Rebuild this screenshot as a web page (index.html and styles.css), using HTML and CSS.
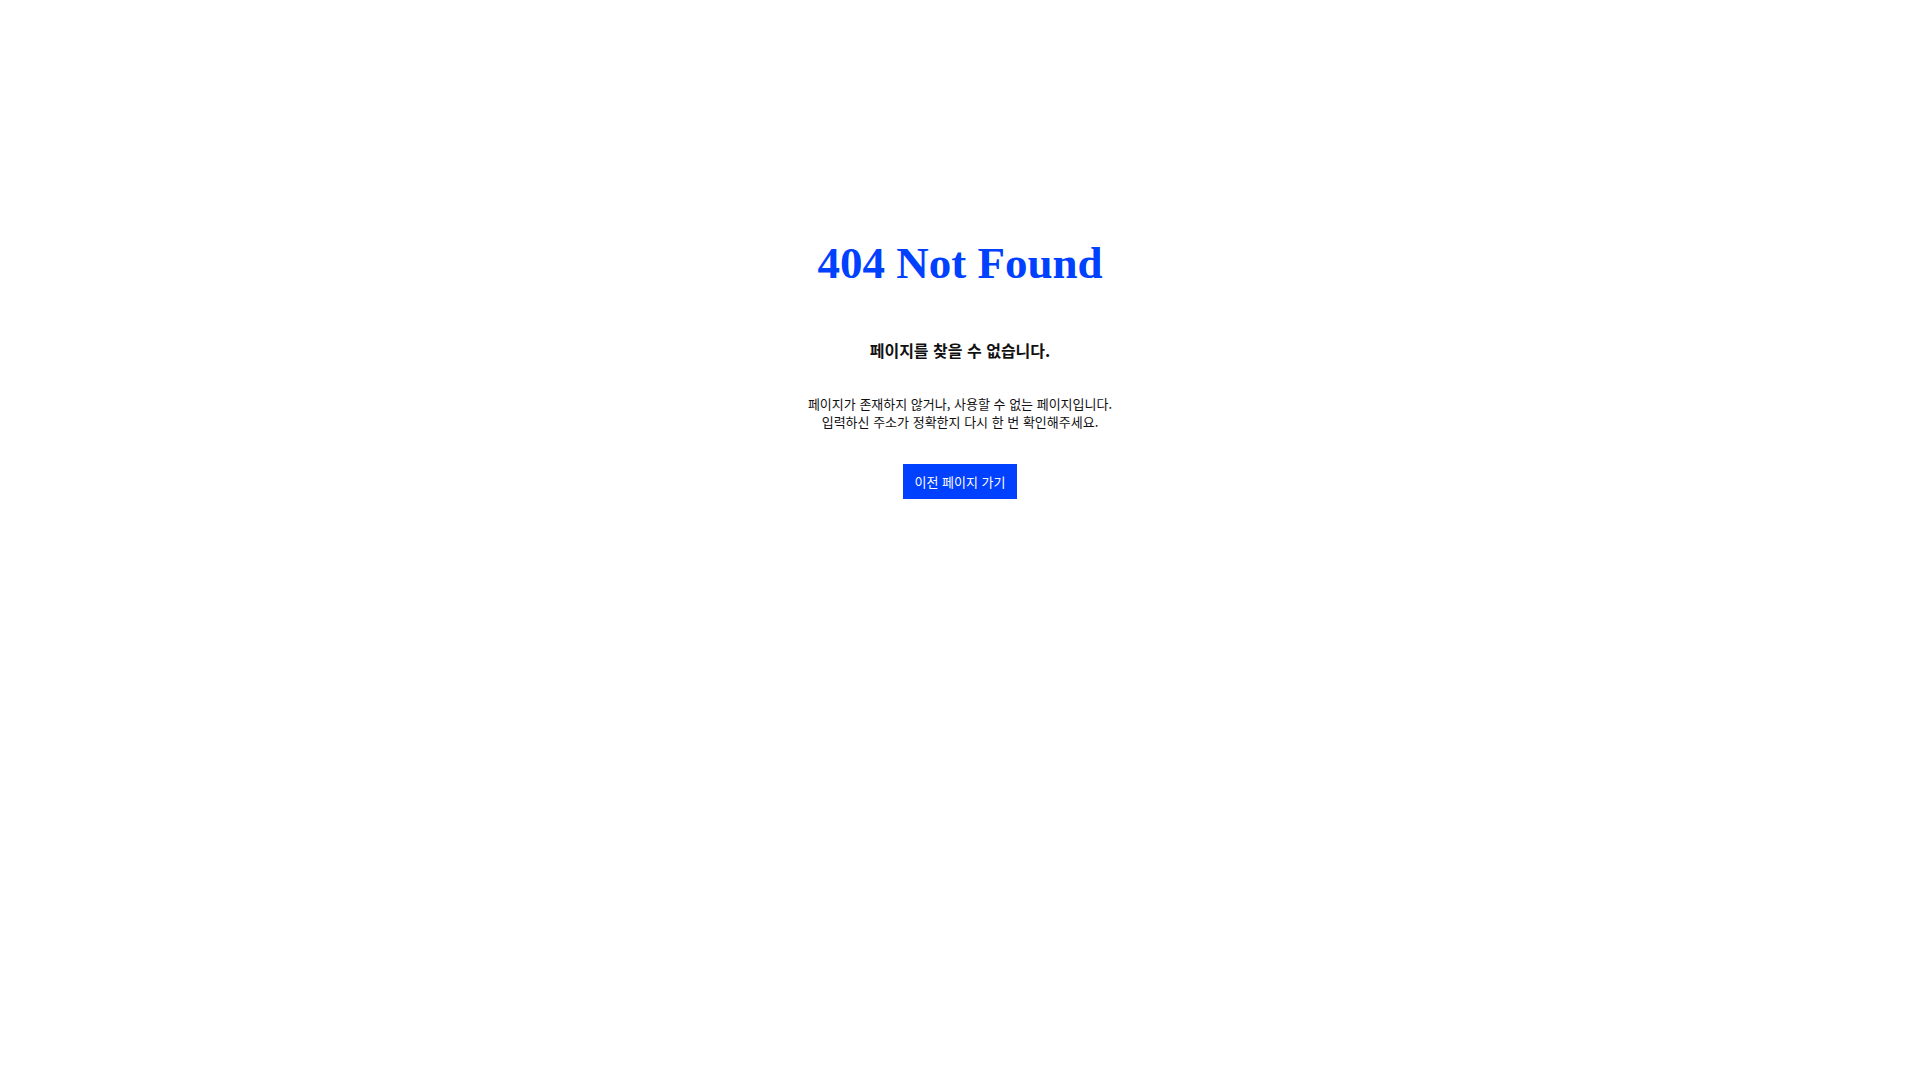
FILE: index.html
```html
<!DOCTYPE html>
<html lang="ko">

<head>
	<meta charset="UTF-8">
	<meta name="viewport" content="width=device-width, initial-scale=1.0">
	<title>404 Not Found</title>
	<link rel="stylesheet" href="styles.css">
</head>

<body>
	<main class="error-page">
		<h1 class="error-code">404 Not Found</h1>
		<h2 class="error-title">페이지를 찾을 수 없습니다.</h2>
		<p class="error-desc">
			페이지가 존재하지 않거나, 사용할 수 없는 페이지입니다.<br>
			입력하신 주소가 정확한지 다시 한 번 확인해주세요.
		</p>
		<button class="back-btn" type="button">이전 페이지 가기</button>
	</main>
</body>

</html>
```

FILE: styles.css
```css
* {
	margin: 0;
	padding: 0;
	box-sizing: border-box;
}

:root {
	--primary: #0040ff;
	--text: #111111;
}

body {
	background: #ffffff;
	color: var(--text);
	font-family: 'Noto Sans CJK KR', 'Noto Sans', sans-serif;
}

.error-page {
	display: flex;
	flex-direction: column;
	align-items: center;
	text-align: center;
	padding-top: 236px;
}

.error-code {
	font-family: 'Liberation Serif', 'Times New Roman', serif;
	font-size: 45px;
	font-weight: 700;
	line-height: 54px;
	color: var(--primary);
}

.error-title {
	margin-top: 49px;
	font-size: 16px;
	font-weight: 700;
	line-height: 22px;
}

.error-desc {
	margin-top: 34px;
	font-size: 13px;
	line-height: 18px;
	color: var(--text);
}

.back-btn {
	margin-top: 33px;
	width: 114px;
	height: 35px;
	border: none;
	background: var(--primary);
	color: #ffffff;
	font-family: 'Noto Sans CJK KR', sans-serif;
	font-size: 13px;
	cursor: pointer;
}
```
